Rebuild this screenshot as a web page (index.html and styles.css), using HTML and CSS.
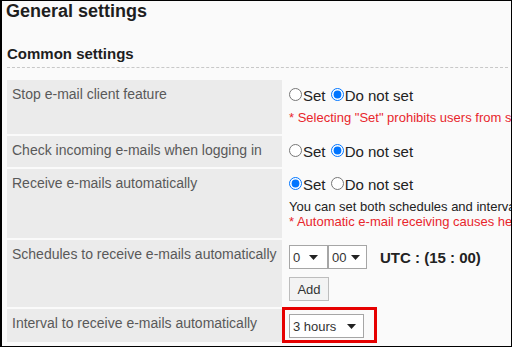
FILE: index.html
```html
<!DOCTYPE html>
<html>
<head>
  <meta charset="utf-8">
  <link rel="stylesheet" href="styles.css">
</head>
<body>
  <div class="frame">
    <h1 class="page-title">General settings</h1>

    <section class="section">
      <h2 class="section-title">Common settings</h2>

      <table class="settings">
        <tr>
          <th>Stop e-mail client feature</th>
          <td class="value">
            <div class="radio-line">
              <label><input type="radio" name="stop-client">Set</label>
              <label><input type="radio" name="stop-client" checked>Do not set</label>
            </div>
            <div class="notes">
              <p class="warn">* Selecting "Set" prohibits users from sending and receiving e-mails.</p>
            </div>
          </td>
        </tr>
        <tr>
          <th>Check incoming e-mails when logging in</th>
          <td class="value">
            <div class="radio-line">
              <label><input type="radio" name="check-login">Set</label>
              <label><input type="radio" name="check-login" checked>Do not set</label>
            </div>
          </td>
        </tr>
        <tr>
          <th>Receive e-mails automatically</th>
          <td class="value">
            <div class="radio-line">
              <label><input type="radio" name="auto-receive" checked>Set</label>
              <label><input type="radio" name="auto-receive">Do not set</label>
            </div>
            <div class="notes">
              <p>You can set both schedules and intervals to receive e-mails.</p>
              <p class="warn">* Automatic e-mail receiving causes heavy load on the server.</p>
            </div>
          </td>
        </tr>
        <tr>
          <th>Schedules to receive e-mails automatically</th>
          <td class="value compact">
            <div class="time-row">
              <div class="select select-hour">
                <span>0</span>
                <svg class="caret" width="9" height="5" viewBox="0 0 9 5"><path d="M0 0h9L4.5 5z"/></svg>
              </div>
              <div class="select select-minute">
                <span>00</span>
                <svg class="caret" width="9" height="5" viewBox="0 0 9 5"><path d="M0 0h9L4.5 5z"/></svg>
              </div>
              <span class="utc">UTC : (15 : 00)</span>
            </div>
            <div class="actions">
              <button class="btn">Add</button>
            </div>
          </td>
        </tr>
        <tr>
          <th>Interval to receive e-mails automatically</th>
          <td class="value compact last">
            <div class="select select-interval">
              <span>3 hours</span>
              <svg class="caret" width="9" height="5" viewBox="0 0 9 5"><path d="M0 0h9L4.5 5z"/></svg>
            </div>
            <div class="highlight"></div>
          </td>
        </tr>
      </table>
    </section>
  </div>
</body>
</html>
```

FILE: styles.css
```css
* {
  margin: 0;
  padding: 0;
  box-sizing: border-box;
}

body {
  background: #fff;
  font-family: 'Liberation Sans', Arial, sans-serif;
  color: #222;
}

/* outer screenshot frame */
.frame {
  width: 512px;
  height: 347px;
  background: #fafafa;
  border-top: 1px solid #000;
  border-right: 1px solid #000;
  border-bottom: 1px solid #000;
  border-left: 2px solid #000;
  overflow: hidden;
}

.page-title {
  font-size: 18px;
  font-weight: 700;
  line-height: 21px;
  padding: 0 4px;
  color: #1e1e1e;
}

.section {
  margin: 23px 3px 0 5px;
}

.section-title {
  font-size: 15px;
  font-weight: 700;
  line-height: 17px;
  padding-bottom: 5px;
  border-bottom: 1px dashed #c8c8c8;
  color: #1e1e1e;
}

.settings {
  margin-top: 10px;
  width: 760px;
  border-collapse: separate;
  border-spacing: 0 2px;
}

.settings th {
  width: 275px;
  background: #ebebeb;
  color: #595959;
  font-size: 14px;
  font-weight: 400;
  line-height: 16px;
  text-align: left;
  vertical-align: top;
  padding: 6px 5px;
  white-space: nowrap;
}

.value {
  vertical-align: top;
  padding: 7px 7px 6px;
  white-space: nowrap;
}

.value.compact {
  padding: 5px 7px 6px;
}

.value.last {
  position: relative;
  padding-bottom: 4px;
}

.radio-line {
  font-size: 15px;
  line-height: 18px;
  color: #222;
}

.radio-line input {
  width: 13px;
  height: 13px;
  margin: 0 1px 0 0;
}

.radio-line label + label {
  margin-left: 1px;
}

.notes {
  margin: 5px 0 3px;
  font-size: 13px;
  line-height: 15px;
  color: #222;
}

.warn {
  color: #e8262c;
}

.time-row {
  display: flex;
  align-items: center;
}

.select {
  display: flex;
  align-items: center;
  justify-content: space-between;
  height: 24px;
  padding: 0 7px 0 3px;
  background: #fff;
  border: 1px solid #a6a6a6;
  font-size: 13px;
  color: #333;
}

.caret {
  fill: #222;
}

.select-hour {
  width: 39px;
  padding-right: 9px;
}

.select-minute {
  width: 39px;
  padding-right: 6px;
}

.select-interval {
  width: 75px;
}

.utc {
  margin-left: 13px;
  font-size: 15px;
  font-weight: 700;
  color: #222;
}

.actions {
  margin-top: 8px;
}

.btn {
  width: 40px;
  height: 24px;
  background: #f3f3f3;
  border: 1px solid #bdbdbd;
  font-family: 'Liberation Sans', Arial, sans-serif;
  font-size: 13px;
  color: #333;
}

/* red annotation box drawn over the interval field */
.highlight {
  position: absolute;
  top: -2px;
  left: 0;
  width: 95px;
  height: 36px;
  border: 3px solid #e60000;
}
```
